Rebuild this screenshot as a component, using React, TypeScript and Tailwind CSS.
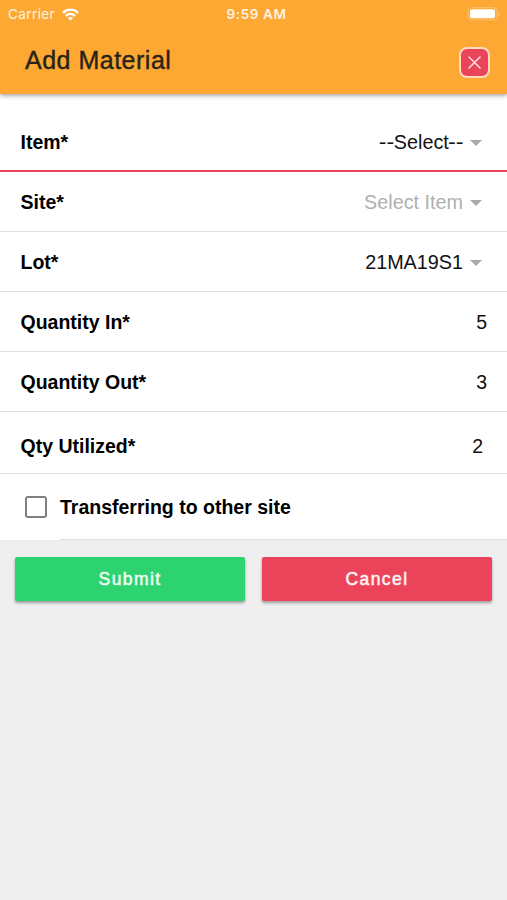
import React from "react";

const fields = [
  { label: "Item*", value: "Select", dashes: true, select: true, row: "h-[78px] pt-[21px] border-b-2 border-[#ea445a]" },
  { label: "Site*", value: "Select Item", select: true, muted: true, row: "h-[60px] pt-[2px] border-b border-[#dedede]" },
  { label: "Lot*", value: "21MA19S1", select: true, row: "h-[60px] pt-[2px] border-b border-[#dedede]" },
  { label: "Quantity In*", value: "5", row: "h-[60px] pt-[2px] border-b border-[#dedede]" },
  { label: "Quantity Out*", value: "3", row: "h-[60px] pt-[2px] border-b border-[#dedede]" },
  { label: "Qty Utilized*", value: "2", inset: true, row: "h-[62px] pt-[9px] border-b border-[#dedede]" },
];

function StatusBar() {
  return (
    <div className="flex h-7 items-center justify-between pl-2 pr-[7px] text-white/85">
      <div className="flex w-[160px] items-center gap-[7px]">
        <span className="font-[Inter,sans-serif] text-[13.5px] tracking-[0.4px]">Carrier</span>
        <svg width="17" height="13" viewBox="0 0 17 13" fill="none" stroke="white" strokeWidth="2.4">
          <path d="M1 4.8C5.3 0.6 11.7 0.6 16 4.8" />
          <path d="M3.8 7.9c2.7-2.6 6.7-2.6 9.4 0" />
          <path d="M8.5 12.8 5.9 10.1c1.5-1.4 3.7-1.4 5.2 0z" fill="white" stroke="none" />
        </svg>
      </div>
      <span className="pl-[5px] font-[Inter,sans-serif] text-[13.5px] font-semibold tracking-[0.6px]">9:59 AM</span>
      <div className="flex w-[160px] justify-end">
        <svg width="33" height="14" viewBox="0 0 33 14" fill="none">
          <rect x="1" y="0.7" width="29" height="12.2" rx="3.6" stroke="white" strokeOpacity="0.3" />
          <rect x="3" y="2.3" width="25" height="9" rx="2" fill="white" />
          <path d="M31.3 4.7c1.8 .7 1.8 3.5 0 4.2z" fill="white" fillOpacity="0.4" />
        </svg>
      </div>
    </div>
  );
}

function Header() {
  return (
    <header className="relative h-[94px] bg-[#fca833] shadow-[0_1px_5px_rgba(0,0,0,0.45)]">
      <StatusBar />
      <div className="flex h-[66px] items-center justify-between pl-[25px] pr-[17px]">
        <h1 className="-mt-[2px] text-[25px] leading-none tracking-[0.5px] text-[#282319] [-webkit-text-stroke:0.4px_#282319]">
          Add Material
        </h1>
        <button
          aria-label="Close"
          className="mt-[3px] flex size-[31px] items-center justify-center rounded-[8px] border-2 border-[#fcd9c0] bg-[#ea445a]"
        >
          <svg width="13" height="13" viewBox="0 0 13 13" stroke="#fde0e0" strokeWidth="1.5" strokeLinecap="round">
            <path d="M1 1l11 11M12 1 1 12" />
          </svg>
        </button>
      </div>
    </header>
  );
}

export default function App() {
  return (
    <div className="min-h-[900px] bg-[#efefef] font-['Liberation_Sans',Arial,sans-serif] text-[19.5px] text-black">
      <Header />
      <main>
        <div className="bg-white">
          {fields.map((f) => (
            <div key={f.label} className={`flex items-center justify-between pl-[20.5px] ${f.row}`}>
              <span className="font-bold">{f.label}</span>
              {f.select ? (
                <span className="flex items-center gap-[7px] pr-[25px]">
                  <span className={f.muted ? "text-[19.8px] text-[#b0b0b0]" : "text-[19.8px] text-[#111]"}>
                    {f.dashes && <span className="inline-block origin-right scale-x-[1.18]">--</span>}
                    {f.value}
                    {f.dashes && <span className="ml-[-1px] inline-block origin-left scale-x-[1.18] pr-[2px]">--</span>}
                  </span>
                  <svg width="12" height="6" viewBox="0 0 12 6" fill="#aaa">
                    <path d="M0 0h12L6 6z" />
                  </svg>
                </span>
              ) : (
                <span className={f.inset ? "pr-6 text-[#111]" : "pr-5 text-[#111]"}>{f.value}</span>
              )}
            </div>
          ))}
          <div className="flex h-[66px] items-center pl-[25px]">
            <span className="size-[22px] rounded-[3px] border-2 border-[#7f7f7f]" />
            <label className="ml-[13px] flex h-full flex-1 items-center border-b border-[#dedede] pt-[2px] font-bold">
              Transferring to other site
            </label>
          </div>
        </div>
        <div className="flex gap-[17px] px-[15px] pt-[17px] text-[17.5px] tracking-[1.4px] text-white/90">
          <button className="h-[44px] flex-1 rounded-[2px] bg-[#2dd36f] pt-px shadow-[0_2px_3px_rgba(0,0,0,0.35)] [-webkit-text-stroke:0.5px]">
            Submit
          </button>
          <button className="h-[44px] flex-1 rounded-[2px] bg-[#eb445a] pt-px shadow-[0_2px_3px_rgba(0,0,0,0.35)] [-webkit-text-stroke:0.5px]">
            Cancel
          </button>
        </div>
      </main>
    </div>
  );
}
